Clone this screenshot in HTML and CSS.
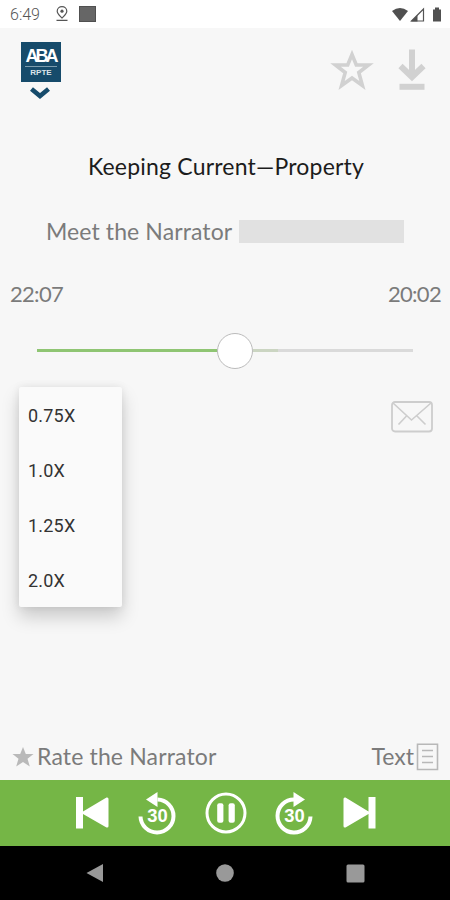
FILE: index.html
```html
<!DOCTYPE html>
<html lang="en">
<head>
<meta charset="utf-8">
<title>Audio player</title>
<link rel="stylesheet" href="styles.css">
</head>
<body>
<div class="screen">
  <div class="status">
    <span class="clock">6:49</span>
    <svg class="pin" width="14" height="16" viewBox="0 0 14 16"><path d="M7 12C4 9 2.200 7.500 2.200 5.200a4.800 4.500 0 0 1 9.600 0C11.800 7.500 10 9 7 12zM1.500 14.300h11" fill="none" stroke="#555" stroke-width="1.200"/><circle cx="7" cy="5.200" r="1.600" fill="#555"/></svg>
    <span class="block"></span>
    <svg class="signals" width="50" height="18" viewBox="0 0 50 18"><path d="M0 6Q8 0 16 6L8 16z" fill="#505050"/><path d="M19.500 16L31.500 4v12z" fill="none" stroke="#555" stroke-width="1.200"/><path d="M19 16.500L25.500 10v6.500z" fill="#505050"/><path d="M41 4.500h2V2.500h4v2h2V16.500h-8z" fill="#505050"/></svg>
  </div>
  <header class="header">
    <div class="brand">
      <div class="logo"><span class="logo-main">ABA</span><span class="logo-sub">RPTE</span></div>
      <svg class="chevron" width="20" height="13" viewBox="0 0 20 13"><path d="M1.500 2L10 9L18.500 2" fill="none" stroke="#164b6b" stroke-width="4.600"/></svg>
    </div>
    <div class="actions">
      <svg width="40" height="42" viewBox="0 0 40 42"><path d="M20 5.500L24.300 16H36.500L26.800 23.500L30.400 36.500L20 29L9.600 36.500L13.200 23.500L3.500 16H15.700z" fill="none" stroke="#d1d1d1" stroke-width="3.600"/></svg>
      <svg width="28" height="42" viewBox="0 0 28 42"><path d="M14 .5V27M2.500 17L14 28L25.500 17" fill="none" stroke="#d1d1d1" stroke-width="6"/><path d="M1.500 37.800h25" stroke="#d1d1d1" stroke-width="6"/></svg>
    </div>
  </header>
  <h1 class="title">Keeping Current—Property</h1>
  <div class="narrator"><span class="narrator-label">Meet the Narrator</span><span class="redacted"></span></div>
  <div class="times"><span>22:07</span><span>20:02</span></div>
  <div class="slider"><span class="played"></span><span class="thumb"></span><span class="buffered"></span><span class="remaining"></span></div>
  <main class="body">
    <ul class="speeds"><li>0.75X</li><li>1.0X</li><li>1.25X</li><li>2.0X</li></ul>
    <svg class="mail" width="42" height="32" viewBox="0 0 42 32"><rect x="1" y="1" width="40" height="29.500" rx="3" fill="none" stroke="#cdcdcd" stroke-width="1.800"/><path d="M2 2L20.500 19L40 2M7.500 23.500L15.500 15M26 15L34.500 23.500" fill="none" stroke="#cdcdcd" stroke-width="1.600"/></svg>
  </main>
  <div class="links">
    <div class="rate"><svg width="22" height="22" viewBox="0 0 22 22"><path d="M11 1L13.800 8H21.500L15.500 12.700L17.800 20.500L11 16L4.200 20.500L6.500 12.700L.5 8H8.200z" fill="#b9b9b9"/></svg><span class="link-label">Rate the Narrator</span></div>
    <div class="text-link"><span class="link-label">Text</span><svg width="23" height="28" viewBox="0 0 23 28"><path d="M1.500 1.300h20v25.200h-20z" fill="none" stroke="#b8b8b8" stroke-width="1.600"/><path d="M6 7.500h11M6 13.500h11M6 19.500h11" stroke="#b8b8b8" stroke-width="1.600"/></svg></div>
  </div>
  <div class="controls">
    <svg width="33" height="42" viewBox="0 0 33 42"><path d="M0 5h7v14.500L30.500 5.500Q32.500 5 32.500 7V34Q32.500 36 30.500 35.500L7 22V36.500H0z" fill="#fff"/></svg>
    <svg width="38" height="42" viewBox="-1 0 38 42"><path d="M1.500 24.500A16.500 16.500 0 1 0 18.500 7.500" fill="none" stroke="#fff" stroke-width="4"/><path d="M7 7.500L18.500 0V15z" fill="#fff"/><text class="skip" x="18.500" y="30" textLength="20.500" lengthAdjust="spacingAndGlyphs">30</text></svg>
    <svg width="42" height="42" viewBox="0 0 42 42"><circle cx="21" cy="21" r="19" fill="none" stroke="#fff" stroke-width="3"/><rect x="12.200" y="11.300" width="6.200" height="19.500" rx="2" fill="#fff"/><rect x="23.600" y="11.300" width="6.200" height="19.500" rx="2" fill="#fff"/></svg>
    <svg width="38" height="42" viewBox="1 0 38 42"><path d="M35.500 24.500A16.500 16.500 0 1 1 19 7.500" fill="none" stroke="#fff" stroke-width="4"/><path d="M30 7.500L18.500 0V15z" fill="#fff"/><text class="skip" x="19.500" y="30" textLength="20.500" lengthAdjust="spacingAndGlyphs">30</text></svg>
    <svg width="33" height="42" viewBox="0 0 33 42"><path d="M32.500 5h-7v14.500L2.500 5.500Q.5 5 .5 7V34Q.5 36 2.500 35.500L25.500 22V36.500h7z" fill="#fff"/></svg>
  </div>
  <nav class="nav">
    <svg width="18" height="20" viewBox="0 0 18 20"><path d="M.5 10L17 1V19z" fill="#999"/></svg>
    <svg width="18" height="18" viewBox="0 0 18 18"><circle cx="9" cy="9" r="8.800" fill="#999"/></svg>
    <svg width="19" height="19" viewBox="0 0 19 19"><rect x=".5" y=".5" width="18" height="18" rx="1.500" fill="#999"/></svg>
  </nav>
</div>
</body>
</html>
```
FILE: styles.css
```css
* { box-sizing: border-box; }
body { margin: 0; font-family: Lato, "Liberation Sans", sans-serif; color: #7b7b7b; }
svg { display: block; flex: none; overflow: visible; }
.screen { width: 450px; height: 900px; display: flex; flex-direction: column; background: #f7f7f7; }
.screen > * { flex: none; }
.status { height: 28px; background: #fff; display: flex; align-items: center; padding: 0 8px 0 10px; }
.clock { font: 300 16px/28px Roboto, sans-serif; color: #555; width: 45px; padding-top: 2px; }
.block { width: 17px; height: 16px; background: #666; border: 1px solid #505050; margin-left: 10px; }
.signals { margin-left: auto; }
.header { height: 112px; display: flex; justify-content: space-between; padding: 14px 24px 0 21px; }
.logo { width: 40px; height: 40px; padding-top: 5px; background: #164b6b; display: flex; flex-direction: column; align-items: center; }
.logo-main { font: 700 18px/19px "Liberation Sans", sans-serif; letter-spacing: -3px; padding-right: 3px; width: 38px; text-align: center; color: #fff; text-indent: 2px; }
.logo-sub { width: 32px; border-top: 1px solid #7c9cae; font: 700 8px/11px "Liberation Sans", sans-serif; text-align: center; color: #dce5ea; }
.chevron { margin: 5px 0 0 9px; }
.actions { display: flex; gap: 26px; padding-top: 7px; }
.title { margin: 0; height: 54px; line-height: 53px; padding-left: 2px; text-align: center; font-weight: 400; font-size: 23px; letter-spacing: .2px; color: #1c1c1c; }
.narrator { height: 74px; display: flex; align-items: center; padding-left: 46px; font-size: 23px; letter-spacing: .1px; }
.narrator-label { width: 193px; white-space: nowrap; }
.redacted { width: 165px; height: 23px; background: #e1e1e1; }
.times { height: 52px; line-height: 52px; display: flex; justify-content: space-between; padding: 0 9px 0 10px; font-size: 22px; letter-spacing: -.7px; }
.slider { height: 61px; display: flex; align-items: center; padding: 0 37px; }
.played { width: 180px; height: 3px; background: #8fc573; }
.thumb { width: 36px; height: 36px; border: 1px solid #bbb; border-radius: 50%; background: #fff; }
.buffered { width: 25px; height: 3px; background: #cbd5c2; }
.remaining { width: 135px; height: 3px; background: #dadada; }
.body { height: 352px; display: flex; justify-content: space-between; align-items: flex-start; padding: 6px 17px 0 19px; }
.speeds { list-style: none; margin: 0; padding: 0; width: 103px; height: 220px; border-radius: 2px; background: #fafafa; box-shadow: 0 10px 18px rgba(0,0,0,.18), 0 0 8px rgba(0,0,0,.08); font: 400 18px/57px Roboto, sans-serif; letter-spacing: .2px; color: #333; }
.speeds li { height: 55px; padding-left: 9px; }
.mail { margin-top: 14px; }
.links { height: 47px; display: flex; justify-content: space-between; align-items: center; padding: 0 11px 0 12px; font-size: 23px; }
.rate, .text-link { display: flex; align-items: center; white-space: nowrap; }
.link-label { padding-bottom: 2px; }
.rate { gap: 3px; letter-spacing: .15px; }
.text-link { gap: 2px; }
.controls { height: 66px; background: #75b646; display: flex; justify-content: space-between; align-items: center; padding: 0 74px 0 76px; }
.skip { font: 700 18px "Liberation Sans", sans-serif; fill: #fff; text-anchor: middle; }
.nav { height: 54px; background: #000; display: flex; justify-content: space-between; align-items: center; padding: 0 85px 0 86px; }
```
